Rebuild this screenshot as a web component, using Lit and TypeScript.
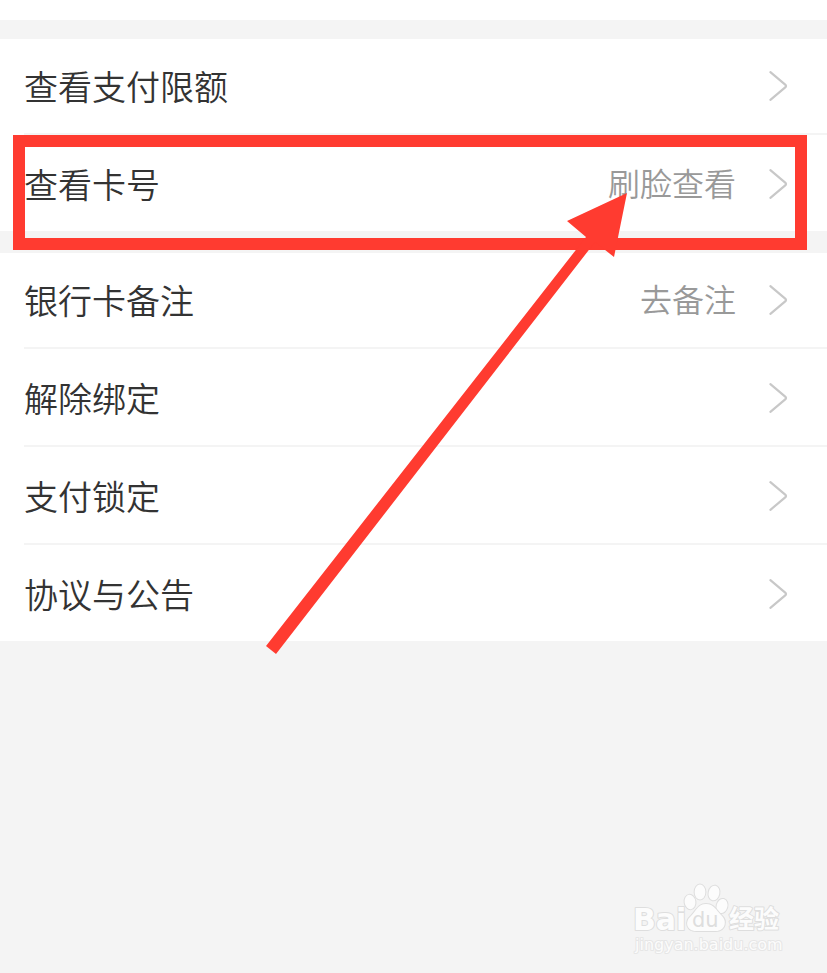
import { LitElement, html, css, svg } from "lit";
import { customElement, property } from "lit/decorators.js";

interface Item {
  label: string;
  value?: string;
  marked?: boolean;
}

const GROUPS: Item[][] = [
  [{ label: "查看支付限额" }, { label: "查看卡号", value: "刷脸查看", marked: true }],
  [
    { label: "银行卡备注", value: "去备注" },
    { label: "解除绑定" },
    { label: "支付锁定" },
    { label: "协议与公告" },
  ],
];

@customElement("setting-row")
class SettingRow extends LitElement {
  @property() label = "";
  @property() value = "";

  static styles = css`
    :host {
      display: block;
    }
    .row {
      display: flex;
      align-items: center;
      width: 100%;
      height: 100%;
      padding: 0 39px 0 24px;
      border: 0;
      background: none;
      font: inherit;
      text-align: left;
      color: #333;
      cursor: pointer;
    }
    .label {
      flex: 1;
      font-size: 34px;
      line-height: 48px;
    }
    .value {
      padding-bottom: 4px;
      font-size: 32px;
      line-height: 48px;
      color: #999;
    }
    .chevron {
      flex: none;
      width: 20px;
      height: 32px;
      margin-left: 32px;
      fill: none;
      stroke: #c8c8c8;
      stroke-width: 2.2;
      stroke-linecap: round;
      stroke-linejoin: round;
    }
  `;

  render() {
    return html`
      <button class="row" type="button">
        <span class="label">${this.label}</span>
        <span class="value">${this.value}</span>
        <svg class="chevron" viewBox="0 0 20 32" aria-hidden="true">
          <path d="M2.4 2.2 L17.2 14.6 Q18.8 16 17.2 17.4 L2.4 29.8" />
        </svg>
      </button>
    `;
  }
}

@customElement("site-watermark")
class SiteWatermark extends LitElement {
  static styles = css`
    :host {
      display: block;
      width: 160px;
    }
    .art {
      display: block;
      width: 100%;
      fill: #fcfcfc;
      stroke: #dedede;
      stroke-width: 2;
      stroke-linejoin: round;
      paint-order: stroke;
    }
    .brand {
      font: 700 30px "DejaVu Sans", sans-serif;
    }
    .du {
      font: 400 21px "DejaVu Sans", sans-serif;
      fill: #dedede;
      stroke: none;
    }
    .cjk {
      font: 700 25px "Noto Sans CJK SC", sans-serif;
    }
    .site {
      font: 400 16px "DejaVu Sans", sans-serif;
      stroke: #e6e6e6;
    }
  `;

  render() {
    return html`
      <svg class="art" viewBox="0 0 160 80" role="img" aria-label="Baidu 经验">
        ${svg`
          <text class="brand" x="2" y="50">Bai</text>
          <ellipse cx="59" cy="22" rx="5.4" ry="7.2" transform="rotate(-8 59 22)" />
          <ellipse cx="69" cy="12" rx="5.4" ry="7.4" />
          <ellipse cx="83" cy="13" rx="5.4" ry="7.4" transform="rotate(12 83 13)" />
          <ellipse cx="91" cy="26" rx="5.4" ry="7.2" transform="rotate(14 91 26)" />
          <path d="M75 24 C83 24 85 30 90 35 C97 41 94 51 85 51 H65 C56 51 53 42 60 36 C66 30 67 24 75 24Z" />
          <text class="du" x="61" y="47">du</text>
          <text class="cjk" x="98" y="48">经验</text>
          <text class="site" x="4" y="70">jingyan.baidu.com</text>
        `}
      </svg>
    `;
  }
}

@customElement("app-root")
class AppRoot extends LitElement {
  static styles = css`
    :host {
      display: block;
      position: relative;
      min-height: 100vh;
      overflow: hidden;
      background: #f4f4f4;
      font-family: "Noto Sans CJK SC", sans-serif;
      font-weight: 350;
    }
    .top {
      height: 20px;
      background: #fff;
    }
    .list {
      display: grid;
      gap: 22px;
      padding-top: 19px;
    }
    .group {
      background: #fff;
    }
    .item {
      position: relative;
      padding-top: 2px;
    }
    .item:first-child {
      padding-top: 0;
    }
    .divider {
      height: 2px;
      margin: 0 0 0 24px;
      border: 0;
      background: #f4f4f4;
    }
    .entry {
      height: 94px;
    }
    .frame {
      position: absolute;
      z-index: 1;
      inset: 0 20px -19px 13px;
      border: 12px solid #ff3b30;
      pointer-events: none;
    }
    .arrow {
      position: absolute;
      z-index: 2;
      top: 58px;
      right: 200px;
      width: 361px;
      height: 461px;
      fill: #ff3b30;
      pointer-events: none;
    }
    .mark {
      position: absolute;
      right: 36px;
      bottom: 13px;
    }
  `;

  render() {
    return html`
      <div class="top"></div>
      <main class="list">
        ${GROUPS.map(
          (group) => html`
            <section class="group">
              ${group.map(
                (item, i) => html`
                  ${i ? html`<hr class="divider" />` : ""}
                  <div class="item">
                    <setting-row
                      class="entry"
                      .label=${item.label}
                      .value=${item.value ?? ""}
                    ></setting-row>
                    ${item.marked
                      ? html`
                          <div class="frame"></div>
                          <svg class="arrow" viewBox="0 0 361 461" aria-hidden="true">
                            <path d="M361 0 L348 64 L329 49 L10 461 L0 453 L320 44 L301 28Z" />
                          </svg>
                        `
                      : ""}
                  </div>
                `
              )}
            </section>
          `
        )}
      </main>
      <site-watermark class="mark"></site-watermark>
    `;
  }
}
